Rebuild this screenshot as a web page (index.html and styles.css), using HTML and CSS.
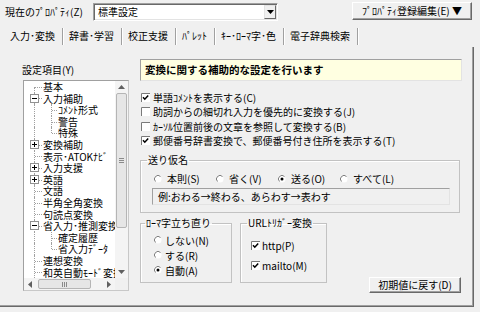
FILE: index.html
```html
<!DOCTYPE html>
<html lang="ja">
<head>
<meta charset="utf-8">
<title>ATOK プロパティ</title>
<link rel="stylesheet" href="styles.css">
</head>
<body>
<div class="dlg">
  <div class="topbar">
    <span class="lbl">現在のﾌﾟﾛﾊﾟﾃｨ(Z)</span>
    <div class="combo">
      <span class="combo-text">標準設定</span>
      <span class="combo-btn"><svg width="7" height="4" viewBox="0 0 7 4"><path d="M0 0H7L3.5 4Z" fill="#000"/></svg></span>
    </div>
    <div class="spacer"></div>
    <div class="btn btn-top">ﾌﾟﾛﾊﾟﾃｨ登録編集(E) ▼</div>
  </div>

  <div class="tabs">
    <div class="tab active">入力･変換</div>
    <div class="tab">辞書･学習</div>
    <div class="tab">校正支援</div>
    <div class="tab">ﾊﾟﾚｯﾄ</div>
    <div class="tab">ｷｰ･ﾛｰﾏ字･色</div>
    <div class="tab">電子辞典検索</div>
  </div>

  <div class="panel">
    <div class="leftcol">
      <div class="tree-label">設定項目(Y)</div>
      <div class="tree">
        <div class="tree-main">
          <div class="tree-items">
            <div class="row"><span class="cell v top h"></span><span class="txt">基本</span></div>
            <div class="row"><span class="cell v h"><svg class="exp" viewBox="0 0 9 9"><rect x="0.5" y="0.5" width="8" height="8" fill="#fff" stroke="#919191"/><path d="M2 4.5H7" stroke="#000"/></svg></span><span class="txt">入力補助</span></div>
            <div class="row"><span class="cell v"></span><span class="cell c2 v h"></span><span class="txt">ｺﾒﾝﾄ形式</span></div>
            <div class="row"><span class="cell v"></span><span class="cell c2 v h"></span><span class="txt">警告</span></div>
            <div class="row"><span class="cell v"></span><span class="cell c2 v end h"></span><span class="txt">特殊</span></div>
            <div class="row"><span class="cell v h"><svg class="exp" viewBox="0 0 9 9"><rect x="0.5" y="0.5" width="8" height="8" fill="#fff" stroke="#919191"/><path d="M2 4.5H7M4.5 2V7" stroke="#000"/></svg></span><span class="txt">変換補助</span></div>
            <div class="row"><span class="cell v h"></span><span class="txt">表示･ATOKﾅﾋﾞ</span></div>
            <div class="row"><span class="cell v h"><svg class="exp" viewBox="0 0 9 9"><rect x="0.5" y="0.5" width="8" height="8" fill="#fff" stroke="#919191"/><path d="M2 4.5H7M4.5 2V7" stroke="#000"/></svg></span><span class="txt">入力支援</span></div>
            <div class="row"><span class="cell v h"><svg class="exp" viewBox="0 0 9 9"><rect x="0.5" y="0.5" width="8" height="8" fill="#fff" stroke="#919191"/><path d="M2 4.5H7M4.5 2V7" stroke="#000"/></svg></span><span class="txt">英語</span></div>
            <div class="row"><span class="cell v h"></span><span class="txt">文語</span></div>
            <div class="row"><span class="cell v h"></span><span class="txt">半角全角変換</span></div>
            <div class="row"><span class="cell v h"></span><span class="txt">句読点変換</span></div>
            <div class="row"><span class="cell v h"><svg class="exp" viewBox="0 0 9 9"><rect x="0.5" y="0.5" width="8" height="8" fill="#fff" stroke="#919191"/><path d="M2 4.5H7" stroke="#000"/></svg></span><span class="txt">省入力･推測変換</span></div>
            <div class="row"><span class="cell v"></span><span class="cell c2 v h"></span><span class="txt">確定履歴</span></div>
            <div class="row"><span class="cell v"></span><span class="cell c2 v end h"></span><span class="txt">省入力ﾃﾞｰﾀ</span></div>
            <div class="row"><span class="cell v h"></span><span class="txt">連想変換</span></div>
            <div class="row"><span class="cell v h"></span><span class="txt">和英自動ﾓｰﾄﾞ変換</span></div>
          </div>
          <div class="vscroll">
            <div class="sb-btn"><svg width="7" height="4" viewBox="0 0 7 4"><path d="M0 4H7L3.5 0Z" fill="#606060"/></svg></div>
            <div class="vthumb"><svg width="5" height="5" viewBox="0 0 5 5"><path d="M0 0.5H5M0 2.5H5M0 4.5H5" stroke="#8a8a8a"/></svg></div>
            <div class="track"></div>
            <div class="sb-btn"><svg width="7" height="4" viewBox="0 0 7 4"><path d="M0 0H7L3.5 4Z" fill="#606060"/></svg></div>
          </div>
        </div>
        <div class="tree-bottom">
          <div class="hscroll">
            <div class="sb-btn h"><svg width="4" height="7" viewBox="0 0 4 7"><path d="M4 0V7L0 3.5Z" fill="#606060"/></svg></div>
            <div class="hthumb"><svg width="5" height="5" viewBox="0 0 5 5"><path d="M0.5 0V5M2.5 0V5M4.5 0V5" stroke="#8a8a8a"/></svg></div>
            <div class="track"></div>
            <div class="sb-btn h"><svg width="4" height="7" viewBox="0 0 4 7"><path d="M0 0V7L4 3.5Z" fill="#606060"/></svg></div>
          </div>
          <div class="corner"></div>
        </div>
      </div>
    </div>

    <div class="rightcol">
      <div class="info">変換に関する補助的な設定を行います</div>

      <div class="checks">
        <div class="chk"><svg class="cb" width="9" height="9" viewBox="0 0 9 9"><rect width="9" height="9" fill="#fff"/><path d="M0.5 9V0.5H9" fill="none" stroke="#7a7a7a"/><path d="M2 4.2L3.8 6.2L7.2 2.4" fill="none" stroke="#000" stroke-width="1.5"/></svg><span>単語ｺﾒﾝﾄを表示する(C)</span></div>
        <div class="chk"><svg class="cb" width="9" height="9" viewBox="0 0 9 9"><rect width="9" height="9" fill="#fff"/><path d="M0.5 9V0.5H9" fill="none" stroke="#7a7a7a"/></svg><span>助詞からの細切れ入力を優先的に変換する(J)</span></div>
        <div class="chk"><svg class="cb" width="9" height="9" viewBox="0 0 9 9"><rect width="9" height="9" fill="#fff"/><path d="M0.5 9V0.5H9" fill="none" stroke="#7a7a7a"/></svg><span>ｶｰｿﾙ位置前後の文章を参照して変換する(B)</span></div>
        <div class="chk"><svg class="cb" width="9" height="9" viewBox="0 0 9 9"><rect width="9" height="9" fill="#fff"/><path d="M0.5 9V0.5H9" fill="none" stroke="#7a7a7a"/><path d="M2 4.2L3.8 6.2L7.2 2.4" fill="none" stroke="#000" stroke-width="1.5"/></svg><span>郵便番号辞書変換で、郵便番号付き住所を表示する(T)</span></div>
      </div>

      <fieldset class="grp okuri">
        <legend>送り仮名</legend>
        <div class="radios">
          <div class="radio"><svg class="rb" width="8" height="8" viewBox="0 0 8 8"><circle cx="4" cy="4" r="3.5" fill="#fff"/><path d="M1.5 6.5A3.5 3.5 0 0 1 6.5 1.5" fill="none" stroke="#808080"/></svg><span>本則(S)</span></div>
          <div class="radio"><svg class="rb" width="8" height="8" viewBox="0 0 8 8"><circle cx="4" cy="4" r="3.5" fill="#fff"/><path d="M1.5 6.5A3.5 3.5 0 0 1 6.5 1.5" fill="none" stroke="#808080"/></svg><span>省く(V)</span></div>
          <div class="radio"><svg class="rb" width="8" height="8" viewBox="0 0 8 8"><circle cx="4" cy="4" r="3.5" fill="#fff"/><path d="M1.5 6.5A3.5 3.5 0 0 1 6.5 1.5" fill="none" stroke="#808080"/><circle cx="4" cy="4" r="1.5" fill="#000"/></svg><span>送る(O)</span></div>
          <div class="radio"><svg class="rb" width="8" height="8" viewBox="0 0 8 8"><circle cx="4" cy="4" r="3.5" fill="#fff"/><path d="M1.5 6.5A3.5 3.5 0 0 1 6.5 1.5" fill="none" stroke="#808080"/></svg><span>すべて(L)</span></div>
        </div>
        <div class="example">例:おわる→終わる、あらわす→表わす</div>
      </fieldset>

      <div class="bottom-row">
        <fieldset class="grp romaji">
          <legend>ﾛｰﾏ字立ち直り</legend>
          <div class="rrows">
            <div class="radio r2"><svg class="rb" width="8" height="8" viewBox="0 0 8 8"><circle cx="4" cy="4" r="3.5" fill="#fff"/><path d="M1.5 6.5A3.5 3.5 0 0 1 6.5 1.5" fill="none" stroke="#808080"/></svg><span>しない(N)</span></div>
            <div class="radio r2"><svg class="rb" width="8" height="8" viewBox="0 0 8 8"><circle cx="4" cy="4" r="3.5" fill="#fff"/><path d="M1.5 6.5A3.5 3.5 0 0 1 6.5 1.5" fill="none" stroke="#808080"/></svg><span>する(R)</span></div>
            <div class="radio r2"><svg class="rb" width="8" height="8" viewBox="0 0 8 8"><circle cx="4" cy="4" r="3.5" fill="#fff"/><path d="M1.5 6.5A3.5 3.5 0 0 1 6.5 1.5" fill="none" stroke="#808080"/><circle cx="4" cy="4" r="1.5" fill="#000"/></svg><span>自動(A)</span></div>
          </div>
        </fieldset>
        <fieldset class="grp url">
          <legend>URLﾄﾘｶﾞｰ変換</legend>
          <div class="urows">
            <div class="chk c2"><svg class="cb" width="9" height="9" viewBox="0 0 9 9"><rect width="9" height="9" fill="#fff"/><path d="M0.5 9V0.5H9" fill="none" stroke="#7a7a7a"/><path d="M2 4.2L3.8 6.2L7.2 2.4" fill="none" stroke="#000" stroke-width="1.5"/></svg><span>http(P)</span></div>
            <div class="chk c2"><svg class="cb" width="9" height="9" viewBox="0 0 9 9"><rect width="9" height="9" fill="#fff"/><path d="M0.5 9V0.5H9" fill="none" stroke="#7a7a7a"/><path d="M2 4.2L3.8 6.2L7.2 2.4" fill="none" stroke="#000" stroke-width="1.5"/></svg><span>mailto(M)</span></div>
          </div>
        </fieldset>
        <div class="btn btn-reset">初期値に戻す(D)</div>
      </div>
    </div>
  </div>
</div>
</body>
</html>
```

FILE: styles.css
```css
* { box-sizing: border-box; }
html, body { margin: 0; padding: 0; }
body {
  width: 480px;
  height: 312px;
  overflow: hidden;
  background: #f0f0f0;
  font-family: "Noto Sans CJK JP", "Noto Sans", sans-serif;
  font-size: 10px;
  color: #000;
}
svg { display: block; flex: none; }
.dlg { width: 480px; height: 312px; }

/* top bar */
.topbar { display: flex; align-items: flex-start; height: 24px; padding-top: 3px; }
.lbl { margin-left: 5px; width: 88px; line-height: 18px; white-space: nowrap; }
.combo {
  width: 185px; height: 18px; background: #fff;
  border: 1px solid; border-color: #a0a0a0 #fff #fff #a0a0a0;
  box-shadow: inset 1px 1px 0 #696969, inset -1px -1px 0 #e3e3e3;
  display: flex; align-items: center;
}
.combo-text { flex: 1; padding-left: 4px; line-height: 16px; }
.combo-btn {
  width: 12px; height: 14px; margin-right: 1px;
  background: #f0f0f0;
  border: 1px solid; border-color: #e3e3e3 #696969 #696969 #e3e3e3;
  display: flex; align-items: center; justify-content: center;
}
.spacer { flex: 1; }
.btn {
  background: #f0f0f0;
  border: 1px solid; border-color: #fff #696969 #696969 #fff;
  box-shadow: inset -1px -1px 0 #a0a0a0;
  text-align: center; white-space: nowrap;
}
.btn-top { width: 120px; height: 18px; margin-top: -1px; margin-right: 8px; line-height: 15px; }

/* tabs */
.tabs { display: flex; height: 17px; margin-top: 4px; padding-left: 4px; }
.tab {
  padding: 1px 7px 0 6px; line-height: 13px; height: 17px;
  border-right: 1px solid #a0a0a0; box-shadow: 1px 0 0 #fff;
  white-space: nowrap;
}

/* panel */
.panel {
  margin-top: 2px; width: 474px; height: 260px;
  border-right: 1px solid #696969; border-bottom: 1px solid #696969;
  box-shadow: inset -1px -1px 0 #a0a0a0;
  display: grid; grid-template-columns: 106px 322px; column-gap: 11px;
  padding-left: 23px; align-items: start;
}

/* left column / tree */
.tree-label { margin-top: 17px; margin-left: -1px; line-height: 12px; }
.tree {
  margin-top: 4px; height: 211px;
  border: 1px solid; border-color: #a0a0a0 #c8c8c8 #c8c8c8 #a0a0a0;
  background: #fff;
}
.tree-main { display: flex; height: 197px; }
.tree-items { width: 91px; overflow: hidden; padding-left: 3px; background: #fff; }
.row { display: flex; height: 11.6px; line-height: 11.6px; white-space: nowrap; }
.cell { position: relative; width: 15px; flex: none; }
.cell.v::before {
  content: ""; position: absolute; left: 7px; top: 0; bottom: 0;
  border-left: 1px dotted #a0a0a0;
}
.cell.c2.v::before { left: 9px; }
.cell.top::before { top: 50%; }
.cell.end::before { bottom: 50%; }
.cell.h::after {
  content: ""; position: absolute; left: 8px; right: 0; top: 50%;
  border-top: 1px dotted #a0a0a0;
}
.cell.c2.h::after { left: 10px; }
.exp { position: absolute; left: 3px; top: 50%; margin-top: -4.5px; width: 9px; height: 9px; z-index: 1; }
.txt { padding-left: 1px; }

.vscroll { width: 13px; display: flex; flex-direction: column; background: #f4f4f4; }
.sb-btn { height: 12px; display: flex; align-items: center; justify-content: center; }
.sb-btn.h { width: 12px; height: 12px; }
.vthumb {
  height: 135px; margin: 0 1px;
  background: #e6e6e6; border: 1px solid #b5b5b5; border-radius: 2px;
  display: flex; align-items: center; justify-content: center;
}
.track { flex: 1; }
.tree-bottom { display: flex; height: 12px; }
.hscroll { width: 91px; display: flex; background: #f4f4f4; }
.hthumb {
  width: 53px; margin: 1px 0 1px 2px;
  background: #e6e6e6; border: 1px solid #b5b5b5; border-radius: 2px;
  display: flex; align-items: center; justify-content: center;
}
.corner { width: 13px; background: #f0f0f0; }

/* right column */
.info {
  margin-top: 12px; height: 22px;
  background: #ffffe1;
  border: 1px solid; border-color: #a0a0a0 #e3e3e3 #e3e3e3 #a0a0a0;
  font-weight: bold; font-size: 10.5px; line-height: 20px;
  padding-left: 4px; white-space: nowrap;
}
.checks { margin-top: 9px; }
.chk { display: flex; align-items: center; height: 14.5px; white-space: nowrap; }
.chk .cb { margin-left: 1px; margin-right: 3px; }

.grp {
  margin: 0; min-width: 0;
  border: 1px solid #c2c2c2;
  box-shadow: inset 1px 1px 0 #fff;
}
.grp legend { padding: 0 1px; line-height: 12px; white-space: nowrap; }

.okuri { margin-top: 6px; width: 320px; padding: 0 0 7px 6px; }
.radios {
  display: grid; grid-template-columns: repeat(4, 62px);
  margin-top: 5px; height: 12px; padding-left: 7px;
}
.radio { display: flex; align-items: center; gap: 5px; white-space: nowrap; }
.example {
  margin-top: 5px; margin-left: 5px; width: 298px; height: 17px;
  border: 1px solid; border-color: #a0a0a0 #e3e3e3 #e3e3e3 #a0a0a0;
  padding-left: 5px; line-height: 15px; white-space: nowrap;
}

.bottom-row { display: flex; align-items: flex-start; margin-top: 4px; }
.romaji { width: 92px; padding: 0 0 4.5px 4px; }
.rrows { padding-top: 3.5px; padding-left: 9px; }
.radio.r2 { height: 15px; gap: 3px; }
.url { width: 87px; margin-left: 8px; padding: 0 0 10px 6px; }
.urows { padding-top: 9px; padding-left: 4px; display: flex; flex-direction: column; gap: 6px; }
.chk.c2 { height: 14px; }
.chk.c2 .cb { margin-left: 0; margin-right: 2px; }
.btn-reset { margin-left: auto; margin-right: 1px; margin-top: 60px; width: 92px; height: 16px; line-height: 13px; }
```
